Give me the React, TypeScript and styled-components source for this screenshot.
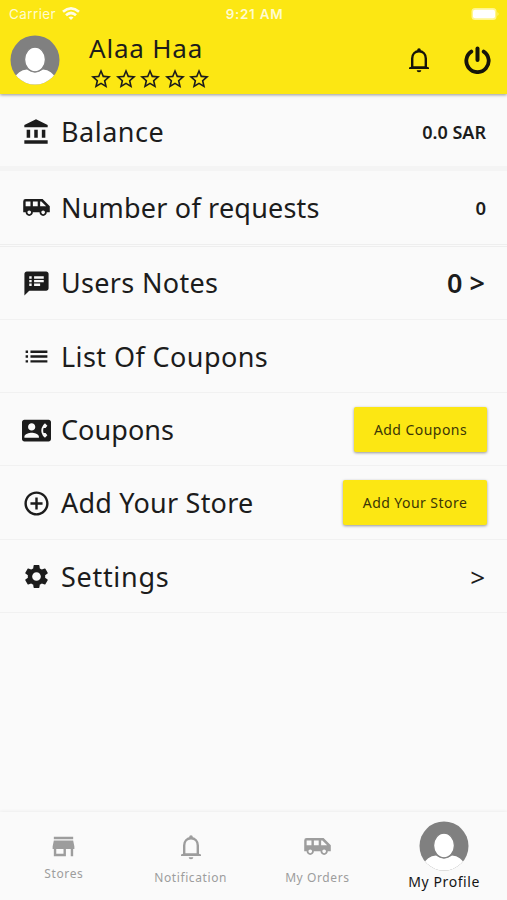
import React from 'react';
import styled, { createGlobalStyle } from 'styled-components';
import {
  MdAccountBalance, MdAirportShuttle, MdSpeakerNotes, MdList, MdContactPhone,
  MdAddCircleOutline, MdSettings, MdStore, MdStarBorder,
} from 'react-icons/md';

const GlobalStyle = createGlobalStyle`
  * { box-sizing: border-box; }
  body { margin: 0; background: #fafafa; }
`;

const Screen = styled.div`
  width: 507px;
  height: 900px;
  display: flex;
  flex-direction: column;
  overflow: hidden;
  background: #fafafa;
  color: #1c1c1c;
  font-family: 'Noto Sans', 'Open Sans', sans-serif;
`;

const Header = styled.header`
  height: 94px;
  flex: none;
  background: #fce713;
  box-shadow: 0 1px 3px rgba(0, 0, 0, 0.4);
  z-index: 1;
`;

const StatusBar = styled.div`
  height: 28px;
  display: grid;
  grid-template-columns: 1fr auto 1fr;
  align-items: center;
  padding: 0 7px 0 9px;
  color: #fffbd0;
  font: 13.5px/28px Inter, sans-serif;
`;

const Carrier = styled.div`
  display: flex;
  align-items: center;
  gap: 6px;
  letter-spacing: 0.4px;
`;

const Clock = styled.div`
  font-size: 13.5px;
  font-weight: 600;
  letter-spacing: 0.7px;
`;

const BatterySlot = styled.div`
  display: flex;
  justify-content: flex-end;
`;

const Profile = styled.div`
  height: 64px;
  display: flex;
  align-items: center;
  padding: 0 15px 0 10px;
`;

const Identity = styled.div`
  margin-left: 29px;
  padding-top: 3px;
  flex: 1;
`;

const Name = styled.div`
  font-size: 26px;
  line-height: 34px;
  letter-spacing: 0.8px;
`;

const Stars = styled.div`
  display: flex;
  gap: 0.6px;
  margin-top: 1px;
  height: 26px;
  align-items: center;
`;

const Actions = styled.div`
  display: flex;
  align-items: center;
  gap: 31px;
  margin-top: -1px;
  color: #15140a;
  svg { display: block; }
`;

const List = styled.main`
  flex: 1;
`;

const Row = styled.section<{ $height: number; $edge?: string; $top?: number }>`
  height: ${(p) => p.$height}px;
  display: flex;
  align-items: center;
  padding: ${(p) => p.$top ?? 0}px 20px 0;
  border-bottom: ${(p) => p.$edge ?? '1px solid #f1f1f1'};
`;

const IconSlot = styled.div`
  width: 32px;
  margin-right: 9px;
  display: flex;
  justify-content: center;
`;

const Label = styled.div<{ $spacing: number }>`
  flex: 1;
  font-size: 27px;
  line-height: 36px;
  letter-spacing: ${(p) => p.$spacing}px;
  white-space: nowrap;
`;

const Value = styled.div<{ $size: number; $weight: number; $inset?: number }>`
  font-size: ${(p) => p.$size}px;
  font-weight: ${(p) => p.$weight};
  margin-right: ${(p) => p.$inset ?? 0}px;
  line-height: 36px;
`;

const Button = styled.button<{ $width: number }>`
  width: ${(p) => p.$width}px;
  height: 45px;
  margin-top: -1px;
  padding: 0;
  border: 0;
  border-radius: 2px;
  background: #fce713;
  box-shadow: 0 1px 3px rgba(0, 0, 0, 0.4);
  color: #3b3606;
  font: 14px 'Noto Sans', sans-serif;
  letter-spacing: 0.45px;
`;

const Nav = styled.nav`
  height: 88px;
  flex: none;
  display: grid;
  grid-template-columns: repeat(4, 1fr);
  box-shadow: 0 -1px 3px rgba(0, 0, 0, 0.05);
`;

const Tab = styled.div<{ $top: number; $active?: boolean }>`
  display: flex;
  flex-direction: column;
  align-items: center;
  padding: ${(p) => p.$top}px 0 0 1px;
  color: ${(p) => (p.$active ? '#151515' : '#9d9d9d')};
  font-size: ${(p) => (p.$active ? 14 : 12)}px;
  letter-spacing: 0.6px;
  line-height: 20px;
  white-space: nowrap;
  svg { display: block; }
`;

const TabText = styled.span<{ $gap: number }>`
  margin-top: ${(p) => p.$gap}px;
`;

const Avatar = () => (
  <svg width="50" height="50" viewBox="0 0 50 50">
    <defs>
      <clipPath id="disc"><circle cx="25" cy="25" r="24.5" /></clipPath>
    </defs>
    <g clipPath="url(#disc)">
      <rect width="50" height="50" fill="#808080" />
      <path d="M4 44Q8 35 17 34.5Q25 40.5 33 34.5Q42 35 46 44V50H4Z" fill="#fff" />
      <ellipse cx="25" cy="24.5" rx="10.4" ry="12.3" fill="#fff" stroke="#808080" strokeWidth="1.2" />
    </g>
  </svg>
);

const Bell = () => (
  <svg width="28" height="28" viewBox="0 0 28 28" fill="none" stroke="currentColor" strokeWidth="2.4">
    <path d="M7.2 21.5V12.5C7.2 8 10 5.3 14 5.3S20.8 8 20.8 12.5V21.5" />
    <path d="M12.2 5V4a1.8 1.8 0 0 1 3.6 0V5ZM4 23V21.4L7.5 20.2H20.5L24 21.4V23ZM11.7 24.2H16.3A2.3 2 0 0 1 11.7 24.2Z" fill="currentColor" stroke="none" />
  </svg>
);

const Wifi = () => (
  <svg width="18" height="14" viewBox="0 0 18 14" fill="none" stroke="#fffde8" strokeWidth="2.7">
    <path d="M1 4.8Q9-2 17 4.8" />
    <path d="M4 8.2Q9 3.8 14 8.2" />
    <path d="M6.5 10.5Q9 8.5 11.5 10.5L9 13Z" fill="#fffde8" stroke="none" />
  </svg>
);

const Battery = () => (
  <svg width="30" height="14" viewBox="0 0 30 14">
    <rect x="1.5" y="1" width="25" height="12" rx="3.5" fill="#fff68e" />
    <rect x="3" y="2.8" width="22" height="8.5" rx="2" fill="#fff" />
    <path d="M27.5 5Q29.5 7 27.5 9Z" fill="#fff68e" />
  </svg>
);

const Power = () => (
  <svg width="28" height="28" viewBox="0 0 28 28" fill="none" stroke="currentColor" strokeWidth="3.8" strokeLinecap="round">
    <path d="M7.3 5.6A11.2 11.2 0 1 0 19.7 5.6" />
    <path d="M13.5 2.6V14" strokeWidth="4" />
  </svg>
);

export default function App() {
  return (
    <Screen>
      <GlobalStyle />
      <Header>
        <StatusBar>
          <Carrier>Carrier <Wifi /></Carrier>
          <Clock>9:21 AM</Clock>
          <BatterySlot><Battery /></BatterySlot>
        </StatusBar>
        <Profile>
          <Avatar />
          <Identity>
            <Name>Alaa Haa</Name>
            <Stars>{[1, 2, 3, 4, 5].map((n) => <MdStarBorder key={n} size={24} />)}</Stars>
          </Identity>
          <Actions>
            <Bell />
            <Power />
          </Actions>
        </Profile>
      </Header>
      <List>
        <Row $height={77} $top={4} $edge="5px solid #f4f4f4">
          <IconSlot><MdAccountBalance size={28} /></IconSlot>
          <Label $spacing={0.5}>Balance</Label>
          <Value $size={18} $weight={600} $inset={1}>0.0 SAR</Value>
        </Row>
        <Row $height={76} $edge="3px double #eeeeee">
          <IconSlot><MdAirportShuttle size={29} /></IconSlot>
          <Label $spacing={0.2}>Number of requests</Label>
          <Value $size={18.5} $weight={600} $inset={1}>0</Value>
        </Row>
        <Row $height={73}>
          <IconSlot><MdSpeakerNotes size={29} /></IconSlot>
          <Label $spacing={0.32}>Users Notes</Label>
          <Value $size={27} $weight={600} $inset={2}>0 &gt;</Value>
        </Row>
        <Row $height={73} $top={1}>
          <IconSlot><MdList size={29} /></IconSlot>
          <Label $spacing={0.42}>List Of Coupons</Label>
        </Row>
        <Row $height={73} $top={2}>
          <IconSlot><MdContactPhone size={29} /></IconSlot>
          <Label $spacing={0.05}>Coupons</Label>
          <Button $width={133}>Add Coupons</Button>
        </Row>
        <Row $height={74} $top={1}>
          <IconSlot><MdAddCircleOutline size={29} /></IconSlot>
          <Label $spacing={0.22}>Add Your Store</Label>
          <Button $width={144}>Add Your Store</Button>
        </Row>
        <Row $height={73} $top={1}>
          <IconSlot><MdSettings size={29} /></IconSlot>
          <Label $spacing={0.7}>Settings</Label>
          <Value $size={26} $weight={400} $inset={2}>&gt;</Value>
        </Row>
      </List>
      <Nav>
        <Tab $top={20}><MdStore size={29} /><TabText $gap={3}>Stores</TabText></Tab>
        <Tab $top={21}><Bell /><TabText $gap={7}>Notification</TabText></Tab>
        <Tab $top={20}><MdAirportShuttle size={29} /><TabText $gap={7}>My Orders</TabText></Tab>
        <Tab $top={9} $active><Avatar /><TabText $gap={1}>My Profile</TabText></Tab>
      </Nav>
    </Screen>
  );
}
